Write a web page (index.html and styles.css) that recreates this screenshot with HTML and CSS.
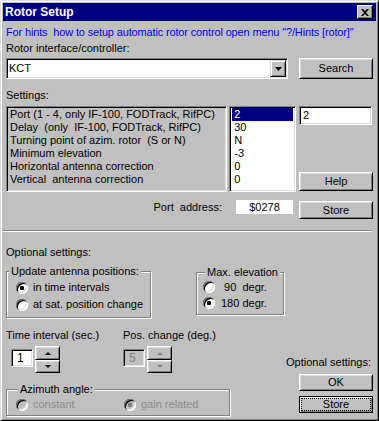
FILE: index.html
```html
<!DOCTYPE html>
<html lang="en">
<head>
  <meta charset="UTF-8">
  <title>Rotor Setup</title>
  <link rel="stylesheet" href="styles.css">
</head>
<body>
  <div class="window">
    <div class="titlebar">
      <span class="title">Rotor Setup</span>
      <span class="close">
        <svg width="8" height="7" viewBox="0 0 8 7"><path d="M0 0h2l2 2 2-2h2L5 3.5 8 7H6L4 5 2 7H0l3-3.5z" fill="#000"/></svg>
      </span>
    </div>

    <div class="content">
      <p class="hint">For hints&nbsp; how to setup automatic rotor control open menu "?/Hints [rotor]"</p>
      <p class="lbl-rotor">Rotor interface/controller:</p>

      <div class="combo-row">
        <div class="combo">
          <span class="combo-text">KCT</span>
          <span class="drop">
            <svg width="7" height="4" viewBox="0 0 7 4"><path d="M0 0h7L3.5 4z" fill="#000"/></svg>
          </span>
        </div>
        <button class="btn btn-search">Search</button>
      </div>

      <p class="lbl-settings">Settings:</p>
      <div class="settings-row">
        <ul class="list names">
          <li>Port (1 - 4, only IF-100, FODTrack, RifPC)</li>
          <li>Delay&nbsp; (only&nbsp; IF-100, FODTrack, RifPC)</li>
          <li>Turning point of azim. rotor&nbsp; (S or N)</li>
          <li>Minimum elevation</li>
          <li>Horizontal antenna correction</li>
          <li>Vertical&nbsp; antenna correction</li>
        </ul>
        <ul class="list values">
          <li class="sel">2</li>
          <li>30</li>
          <li>N</li>
          <li>-3</li>
          <li>0</li>
          <li>0</li>
        </ul>
        <div class="side">
          <div class="edit">2</div>
          <button class="btn btn-side">Help</button>
        </div>
      </div>

      <div class="port-row">
        <span class="port-label">Port&nbsp; address:</span>
        <span class="port-value">$0278</span>
        <button class="btn btn-store">Store</button>
      </div>

      <hr class="sep">

      <p class="lbl-opt">Optional settings:</p>
      <div class="groups-row">
        <fieldset class="group group-update">
          <legend>Update antenna positions:</legend>
          <div class="radio-row"><span class="radio checked"></span><span>in time intervals</span></div>
          <div class="radio-row"><span class="radio"></span><span>at sat. position change</span></div>
        </fieldset>
        <fieldset class="group group-elev">
          <legend>Max. elevation</legend>
          <div class="radio-row"><span class="radio"></span><span>&nbsp;90&nbsp; degr.</span></div>
          <div class="radio-row"><span class="radio checked"></span><span>180 degr.</span></div>
        </fieldset>
      </div>

      <div class="bottom-row">
        <div class="bottom-left">
          <div class="spin-row">
            <div class="spin-block first">
              <p>Time interval (sec.)</p>
              <div class="spin">
                <div class="spin-edit">1</div>
                <div class="spinner">
                  <span class="spin-btn"><i class="arr-up"></i></span>
                  <span class="spin-btn down"><i class="arr-down"></i></span>
                </div>
              </div>
            </div>
            <div class="spin-block disabled">
              <p>Pos. change (deg.)</p>
              <div class="spin">
                <div class="spin-edit">5</div>
                <div class="spinner">
                  <span class="spin-btn"><i class="arr-up"></i></span>
                  <span class="spin-btn down"><i class="arr-down"></i></span>
                </div>
              </div>
            </div>
          </div>

          <fieldset class="group group-azimuth">
            <legend>Azimuth angle:</legend>
            <div class="radio-row dim">
              <span class="radio-item first"><span class="radio"></span><span>constant</span></span>
              <span class="radio-item"><span class="radio checked"></span><span>gain related</span></span>
            </div>
          </fieldset>
        </div>

        <div class="bottom-right">
          <p class="opt-right">Optional settings:</p>
          <button class="btn btn-ok">OK</button>
          <button class="btn btn-ok focus"><span>Store</span></button>
        </div>
      </div>
    </div>
  </div>
</body>
</html>
```

FILE: styles.css
```css
* {
  box-sizing: border-box;
}
html, body {
  margin: 0;
  padding: 0;
}
body {
  width: 379px;
  height: 421px;
  background: #c0c0c0;
  font: 11px/13px "Liberation Sans", Arial, sans-serif;
  color: #000;
}
p {
  margin: 0;
}

/* window frame */
.window {
  width: 379px;
  height: 421px;
  border: 1px solid;
  border-color: #dfdfdf #000 #000 #dfdfdf;
  box-shadow: inset 1px 1px #fff, inset -1px -1px #808080;
  padding: 2px;
}
.titlebar {
  height: 18px;
  background: #000080;
  color: #fff;
  display: flex;
  align-items: center;
  justify-content: space-between;
  padding: 0 3px 0 2px;
}
.title {
  font-weight: bold;
  font-size: 12px;
}
.close {
  width: 16px;
  height: 14px;
  display: flex;
  align-items: center;
  justify-content: center;
  background: #c0c0c0;
  border: 1px solid;
  border-color: #fff #000 #000 #fff;
  box-shadow: inset -1px -1px #808080;
}

.content {
  padding: 0 3px;
}

/* shared 3d looks */
.btn {
  display: block;
  font: inherit;
  color: #000;
  background: #c0c0c0;
  border: 1px solid;
  border-color: #fff #000 #000 #fff;
  box-shadow: inset 1px 1px #dfdfdf, inset -1px -1px #808080;
  padding: 0;
}
.combo, .list, .edit, .spin-edit {
  border: 1px solid;
  border-color: #808080 #fff #fff #808080;
  box-shadow: inset 1px 1px #000, inset -1px -1px #dfdfdf;
}

.hint {
  color: #0000ff;
  margin-top: 5px;
  white-space: nowrap;
  letter-spacing: -0.15px;
}
.lbl-rotor {
  margin-top: 3px;
}
.combo-row {
  display: flex;
  margin-top: 3px;
  height: 21px;
}
.combo {
  width: 282px;
  background: #fff;
  display: flex;
  padding: 1px;
}
.combo-text {
  flex: 1;
  padding-left: 1px;
  line-height: 17px;
}
.drop {
  width: 16px;
  height: 17px;
  display: flex;
  align-items: center;
  justify-content: center;
  background: #c0c0c0;
  border: 1px solid;
  border-color: #dfdfdf #000 #000 #dfdfdf;
  box-shadow: inset 1px 1px #fff, inset -1px -1px #808080;
}
.btn-search {
  margin-left: 11px;
  width: 74px;
  height: 21px;
}

.lbl-settings {
  margin-top: 10px;
}
.settings-row {
  display: flex;
  gap: 2px;
  margin-top: 4px;
  height: 86px;
}
.list {
  margin: 0;
  padding: 1px 0 0;
  list-style: none;
  white-space: nowrap;
  overflow: hidden;
}
.names {
  width: 222px;
  background: #c0c0c0;
  padding-left: 3px;
}
.values {
  width: 67px;
  background: #fff;
  padding-left: 2px;
  padding-right: 2px;
}
.values li {
  padding-left: 2px;
}
.values .sel {
  background: #000080;
  color: #fff;
}
.side {
  width: 74px;
  margin-left: 1px;
  display: flex;
  flex-direction: column;
  justify-content: space-between;
  padding-bottom: 1px;
}
.edit {
  width: 73px;
  height: 19px;
  background: #fff;
  padding-left: 3px;
  line-height: 17px;
}
.btn-side {
  width: 74px;
  height: 19px;
}

.port-row {
  display: flex;
  margin-top: 8px;
  height: 19px;
}
.port-label {
  flex: 1;
  text-align: right;
  padding-right: 14px;
  line-height: 14px;
}
.port-value {
  width: 57px;
  height: 14px;
  background: #fff;
  text-align: center;
  line-height: 14px;
  margin-right: 6px;
}
.btn-store {
  width: 74px;
  height: 18px;
  margin-top: 1px;
}

.sep {
  margin: 11px 1px 0 -3px;
  border: 0;
  border-top: 1px solid #808080;
  border-bottom: 1px solid #fff;
  height: 0;
}
.lbl-opt {
  margin-top: 14px;
}

/* group boxes */
.groups-row {
  display: flex;
  align-items: flex-start;
  margin-top: 6px;
}
.group {
  margin: 0;
  padding: 0;
  min-width: 0;
  border: 1px solid #808080;
  box-shadow: inset 1px 1px #fff, 1px 1px #fff;
}
.group legend {
  padding: 0 2px;
  margin-left: 2px;
  line-height: 12px;
  background: #c0c0c0;
}
.group-update {
  width: 145px;
  padding: 2px 0 4px;
}
.group-elev {
  width: 88px;
  margin-left: 45px;
  margin-top: 1px;
  padding: 1px 0 3px;
}
.group-elev legend {
  margin-left: 8px;
}
.group-elev .radio-row {
  height: 16px;
}
.group-elev .radio {
  margin-left: 6px;
  margin-right: 6px;
}

.radio-row {
  display: flex;
  align-items: center;
  height: 17px;
  white-space: nowrap;
}
.radio {
  position: relative;
  width: 12px;
  height: 12px;
  flex: none;
  border-radius: 50%;
  background: #fff;
  box-shadow: inset 1px 1px #808080, inset -1px -1px #fff, inset 2px 2px #000, inset -2px -2px #dfdfdf;
  margin-left: 9px;
  margin-right: 5px;
}
.radio.checked::after {
  content: "";
  position: absolute;
  left: 4px;
  top: 4px;
  width: 4px;
  height: 4px;
  border-radius: 1px;
  background: #000;
}

/* bottom part */
.bottom-row {
  display: flex;
  margin-top: 11px;
}
.bottom-left {
  width: 224px;
}
.spin-row {
  display: flex;
}
.spin-block.first {
  width: 117px;
}
.spin-block.first .spin {
  margin-left: 5px;
}
.spin {
  display: flex;
  margin-top: 4px;
}
.spin-edit {
  width: 22px;
  height: 18px;
  margin-top: 3px;
  background: #fff;
  padding-left: 5px;
  line-height: 16px;
  font-size: 12px;
}
.spinner {
  margin-left: 2px;
  display: flex;
  flex-direction: column;
}
.spin-btn {
  width: 25px;
  height: 14px;
  display: flex;
  align-items: center;
  justify-content: center;
  border: 1px solid;
  border-color: #fff #000 #000 #fff;
  box-shadow: inset 1px 1px #dfdfdf, inset -1px -1px #808080;
}
.spin-btn.down {
  height: 13px;
}
.arr-up, .arr-down {
  width: 0;
  height: 0;
  border-left: 3px solid transparent;
  border-right: 3px solid transparent;
}
.arr-up {
  border-bottom: 3px solid #000;
}
.arr-down {
  border-top: 3px solid #000;
}
.disabled .spin-edit {
  background: #c0c0c0;
  color: #808080;
}
.disabled .arr-up {
  border-bottom-color: #808080;
}
.disabled .arr-down {
  border-top-color: #808080;
}

.group-azimuth {
  width: 224px;
  margin-top: 10px;
  padding: 1px 0 2px;
}
.group-azimuth legend {
  margin-left: 11px;
}
.dim {
  color: #8a8a8a;
}
.dim .radio {
  background: #c0c0c0;
}
.dim .radio.checked::after {
  background: #808080;
}
.radio-item {
  display: flex;
  align-items: center;
}
.radio-item.first {
  width: 108px;
}

.bottom-right {
  margin-left: auto;
  width: 90px;
  display: flex;
  flex-direction: column;
  align-items: flex-end;
}
.opt-right {
  margin-top: 27px;
  padding-right: 2px;
  white-space: nowrap;
}
.btn-ok {
  width: 74px;
  height: 17px;
  margin-top: 5px;
}
.focus {
  border-color: #000;
  box-shadow: inset 1px 1px #fff, inset -1px -1px #808080;
  padding: 2px;
}
.focus span {
  display: block;
  height: 100%;
  outline: 1px dotted #000;
  line-height: 11px;
}
```
